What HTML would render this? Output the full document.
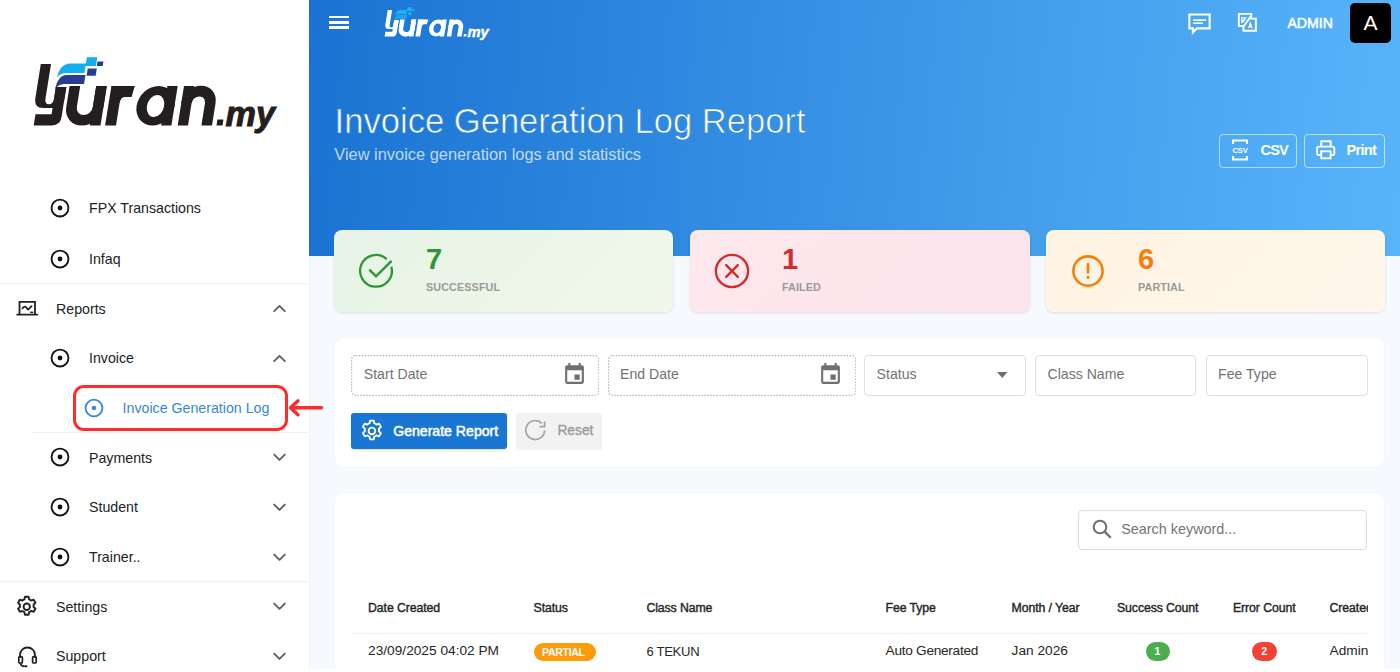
<!DOCTYPE html>
<html>
<head>
<meta charset="utf-8">
<style>
html,body{margin:0;padding:0;}
body{width:1400px;height:672px;overflow:hidden;position:relative;background:#f6faff;font-family:"Liberation Sans",sans-serif;}
.a{position:absolute;}
.t{position:absolute;line-height:1;white-space:nowrap;}
#side{position:absolute;left:0;top:0;width:308.6px;height:672px;background:#fff;box-shadow:1px 0 2px rgba(0,0,0,0.035);z-index:1;}
#hdr{position:absolute;left:308.6px;top:0;width:1091.4px;height:256px;background:linear-gradient(95deg,#1a73d2 0%,#58b4fa 100%);}
.side-t{color:#222;font-size:14.2px;}
.div{position:absolute;height:1px;background:#f0f0f0;}
.card{position:absolute;top:230px;height:82px;border-radius:8px;box-shadow:0 1px 3px rgba(0,0,0,0.12);}
.num{font-size:29px;font-weight:700;}
.lbl{font-size:10.8px;font-weight:700;color:#9a9a9a;}
.fld{position:absolute;top:355px;height:41px;box-sizing:border-box;border-radius:4px;background:#fff;}
.dot{border:1px dotted #b5b5b5;}
.sol{border:1.5px solid #dedede;}
.ph{color:#737373;font-size:14px;}
.th{font-size:11.7px;font-weight:700;color:#2a2a2a;}
.td{font-size:13.5px;color:#2a2a2a;}
</style>
</head>
<body>
<!-- SIDEBAR -->
<div id="side">
<svg class="a" style="left:30px;top:50px" width="250" height="90" viewBox="30 50 250 90">
<style>.lf{fill:#231f20}.lt{stroke:#231f20}.s1{fill:#13aff0}.s2{fill:#2a3b93}</style>
<g transform="matrix(1,0,-0.16,1,20.06,0)">
 <path class="s1" d="M86.4,57.3 L86.4,66 L76,66 L76,72.9 L59,72.9 C54,72.9 51,74.5 49.5,77 C50,69 53,63.6 61,63.6 L76,63.6 L76,57.3 Z"/>
 <path class="s2" d="M77.4,75.1 L59,75.1 C52,75.1 50,81 49.3,89.5 C51,85.5 54,83.9 59,83.9 L77.4,83.9 Z"/>
 <rect class="s2" x="78.7" y="68.6" width="9.05" height="7.15"/>
 <rect class="s2" x="87.3" y="61.4" width="5.9" height="4.6"/>
 <path class="lf" d="M31,64 L41.2,64 L41.2,98.5 Q41.2,104.3 45.5,104.3 Q49.8,104.3 49.8,98.5 L49.8,87 L60.2,87 L60.2,99 Q60.2,108 51,108 L40.5,108 Q31,108 31,98 Z"/>
 <path class="lf" d="M49.8,87 L60.2,87 L60.2,117 Q60.2,125.4 52,125.4 L33.7,125.4 L33.7,114.2 L49.8,114.2 Z"/>
 <path class="lt" fill="none" stroke-width="10.6" d="M68.6,86 L68.6,107 A13.3,13.3 0 0 0 95.2,107 L95.2,86"/>
 <rect class="lf" x="89.9" y="86" width="10.6" height="39.4"/>
 <rect class="lf" x="105.1" y="86" width="10.9" height="39.4"/>
 <path class="lf" d="M105.1,86 L128.5,86 L127,96.9 L120,96.9 Q116,97.5 116,103 Z"/>
 <path class="lf" fill-rule="evenodd" d="M133.45,105.7 A19,19.7 0 1 0 171.45,105.7 A19,19.7 0 1 0 133.45,105.7 Z M143.8,105.95 A8.65,10.95 0 1 0 161.1,105.95 A8.65,10.95 0 1 0 143.8,105.95 Z"/>
 <rect class="lf" x="161.1" y="86" width="10.3" height="39.4"/>
 <rect class="lf" x="177.7" y="86" width="10.3" height="39.4"/>
 <path class="lt" fill="none" stroke-width="10.6" d="M182.85,103 A11.9,11.9 0 0 1 206.7,103 L206.7,125.4"/>
 <rect class="lf" x="216.5" y="119.5" width="6" height="5.9"/>
</g>
<text class="lf" x="225.6" y="125.5" font-family="Liberation Sans" font-weight="700" font-style="italic" font-size="34.2" stroke="#231f20" stroke-width="1">my</text>
</svg>
<svg class="a" style="left:49.1px;top:197.1px" width="22" height="22" viewBox="0 0 22 22"><circle cx="11" cy="11" r="8.45" fill="none" stroke="#151515" stroke-width="1.85"/><circle cx="11" cy="11" r="2.4" fill="#111"/></svg>
<div class="t" style="left:89.0px;top:201.38px;font-size:14.2px;color:#222;">FPX Transactions</div>
<svg class="a" style="left:49.1px;top:247.60000000000002px" width="22" height="22" viewBox="0 0 22 22"><circle cx="11" cy="11" r="8.45" fill="none" stroke="#151515" stroke-width="1.85"/><circle cx="11" cy="11" r="2.4" fill="#111"/></svg>
<div class="t" style="left:89.0px;top:251.88px;font-size:14.2px;color:#222;">Infaq</div>
<!--ICON reports-->
<div class="t" style="left:56.0px;top:301.88px;font-size:14.2px;color:#222;">Reports</div>
<svg class="a" style="left:271.5px;top:304.1px" width="15" height="9" viewBox="0 0 15 9"><path d="M2.2,7.2 L7.5,1.9 L12.8,7.2" fill="none" stroke="#606060" stroke-width="1.9" stroke-linecap="round" stroke-linejoin="round"/></svg>
<svg class="a" style="left:49.1px;top:347.0px" width="22" height="22" viewBox="0 0 22 22"><circle cx="11" cy="11" r="8.45" fill="none" stroke="#151515" stroke-width="1.85"/><circle cx="11" cy="11" r="2.4" fill="#111"/></svg>
<div class="t" style="left:89.0px;top:351.28px;font-size:14.2px;color:#222;">Invoice</div>
<svg class="a" style="left:271.5px;top:353.5px" width="15" height="9" viewBox="0 0 15 9"><path d="M2.2,7.2 L7.5,1.9 L12.8,7.2" fill="none" stroke="#606060" stroke-width="1.9" stroke-linecap="round" stroke-linejoin="round"/></svg>
<svg class="a" style="left:82.6px;top:396.6px" width="22" height="22" viewBox="0 0 22 22"><circle cx="11" cy="11" r="8.4" fill="none" stroke="#3b86d9" stroke-width="1.8"/><circle cx="11" cy="11" r="2.3" fill="#3b86d9"/></svg>
<div class="t" style="left:122.6px;top:400.88px;font-size:14.2px;color:#3b86d9;">Invoice Generation Log</div>
<svg class="a" style="left:49.1px;top:446.4px" width="22" height="22" viewBox="0 0 22 22"><circle cx="11" cy="11" r="8.45" fill="none" stroke="#151515" stroke-width="1.85"/><circle cx="11" cy="11" r="2.4" fill="#111"/></svg>
<div class="t" style="left:89.0px;top:450.68px;font-size:14.2px;color:#222;">Payments</div>
<svg class="a" style="left:271.5px;top:452.9px" width="15" height="9" viewBox="0 0 15 9"><path d="M2.2,1.6 L7.5,6.9 L12.8,1.6" fill="none" stroke="#606060" stroke-width="1.9" stroke-linecap="round" stroke-linejoin="round"/></svg>
<svg class="a" style="left:49.1px;top:496.2px" width="22" height="22" viewBox="0 0 22 22"><circle cx="11" cy="11" r="8.45" fill="none" stroke="#151515" stroke-width="1.85"/><circle cx="11" cy="11" r="2.4" fill="#111"/></svg>
<div class="t" style="left:89.0px;top:500.48px;font-size:14.2px;color:#222;">Student</div>
<svg class="a" style="left:271.5px;top:502.7px" width="15" height="9" viewBox="0 0 15 9"><path d="M2.2,1.6 L7.5,6.9 L12.8,1.6" fill="none" stroke="#606060" stroke-width="1.9" stroke-linecap="round" stroke-linejoin="round"/></svg>
<svg class="a" style="left:49.1px;top:546.2px" width="22" height="22" viewBox="0 0 22 22"><circle cx="11" cy="11" r="8.45" fill="none" stroke="#151515" stroke-width="1.85"/><circle cx="11" cy="11" r="2.4" fill="#111"/></svg>
<div class="t" style="left:89.0px;top:550.48px;font-size:14.2px;color:#222;">Trainer..</div>
<svg class="a" style="left:271.5px;top:552.7px" width="15" height="9" viewBox="0 0 15 9"><path d="M2.2,1.6 L7.5,6.9 L12.8,1.6" fill="none" stroke="#606060" stroke-width="1.9" stroke-linecap="round" stroke-linejoin="round"/></svg>
<!--ICON gear-->
<div class="t" style="left:56.0px;top:599.88px;font-size:14.2px;color:#222;">Settings</div>
<svg class="a" style="left:271.5px;top:602.1px" width="15" height="9" viewBox="0 0 15 9"><path d="M2.2,1.6 L7.5,6.9 L12.8,1.6" fill="none" stroke="#606060" stroke-width="1.9" stroke-linecap="round" stroke-linejoin="round"/></svg>
<!--ICON support-->
<div class="t" style="left:56.0px;top:649.48px;font-size:14.2px;color:#222;">Support</div>
<svg class="a" style="left:271.5px;top:651.7px" width="15" height="9" viewBox="0 0 15 9"><path d="M2.2,1.6 L7.5,6.9 L12.8,1.6" fill="none" stroke="#606060" stroke-width="1.9" stroke-linecap="round" stroke-linejoin="round"/></svg>
<svg class="a" style="left:14px;top:296px" width="26" height="24" viewBox="14 296 26 24"><path d="M19.5,314 V301.9 H35 V314" fill="none" stroke="#222" stroke-width="1.8"/><path d="M17.2,314.6 H37.3" stroke="#222" stroke-width="1.9" stroke-linecap="round"/><path d="M22.4,308.4 Q24.2,306 25.6,306.7 L28.1,309.6 L31.6,306.2" fill="none" stroke="#222" stroke-width="1.7" stroke-linecap="round" stroke-linejoin="round"/><rect x="30.1" y="311.6" width="3.2" height="1.5" fill="#222"/></svg>
<svg class="a" style="left:14.4px;top:593.7px" width="25.5" height="25.5" viewBox="0 0 24 24"><path fill="none" stroke="#222" stroke-width="1.8" stroke-linejoin="round" d="M10.3,2.6 h3.4 l0.5,2.4 a7.4,7.4 0 0 1 2,1.15 l2.3,-0.8 l1.7,2.95 l-1.8,1.6 a7.4,7.4 0 0 1 0,2.3 l1.8,1.6 l-1.7,2.95 l-2.3,-0.8 a7.4,7.4 0 0 1 -2,1.15 l-0.5,2.4 h-3.4 l-0.5,-2.4 a7.4,7.4 0 0 1 -2,-1.15 l-2.3,0.8 l-1.7,-2.95 l1.8,-1.6 a7.4,7.4 0 0 1 0,-2.3 l-1.8,-1.6 l1.7,-2.95 l2.3,0.8 a7.4,7.4 0 0 1 2,-1.15 Z"/><circle cx="12" cy="12" r="3" fill="none" stroke="#222" stroke-width="1.8"/></svg>
<svg class="a" style="left:16px;top:644px" width="23" height="24" viewBox="0 0 23 24"><path d="M4,14 V11 a7.5,7.5 0 0 1 15,0 V14" fill="none" stroke="#222" stroke-width="1.8"/><rect x="2.8" y="12.6" width="3.6" height="6.4" rx="1" fill="none" stroke="#222" stroke-width="1.7"/><rect x="16.6" y="12.6" width="3.6" height="6.4" rx="1" fill="none" stroke="#222" stroke-width="1.7"/><path d="M4.6,19 Q4.6,22 8,22.3" fill="none" stroke="#222" stroke-width="1.7"/><rect x="8" y="21.3" width="3.5" height="2" rx="1" fill="#222"/></svg>
<div class="div" style="left:0;top:282.5px;width:308px"></div>
<div class="div" style="left:31px;top:432px;width:277px"></div>
<div class="div" style="left:0;top:581px;width:308px"></div>
</div>
<div class="a" style="z-index:5;left:72.8px;top:384.6px;width:215.4px;height:46.2px;box-sizing:border-box;border:3.4px solid #ff2b2b;border-radius:11px"></div>
<svg class="a" style="z-index:5;left:286px;top:398px" width="40" height="20" viewBox="286 398 40 20"><path d="M290.5,407.8 H321.5 M298,400.8 L290.5,407.8 L298,414.8" fill="none" stroke="#ff2b2b" stroke-width="3.4" stroke-linecap="round" stroke-linejoin="round"/></svg>

<!-- HEADER -->
<div id="hdr"></div>
<!--HDRCONTENT-->
<div class="a" style="left:329.2px;top:15.6px;width:20px;height:2.6px;background:#fff"></div>
<div class="a" style="left:329.2px;top:21px;width:20px;height:2.6px;background:#fff"></div>
<div class="a" style="left:329.2px;top:26.3px;width:20px;height:2.6px;background:#fff"></div>
<svg class="a" style="left:1184px;top:10px" width="30" height="26" viewBox="1184 10 30 26"><path d="M1189.35,14.55 H1209.65 V28.35 H1196.9 L1192.9,32.4 V28.35 H1189.35 Z" fill="none" stroke="#fff" stroke-width="2.1" stroke-linejoin="miter"/><rect x="1193.1" y="19.3" width="13" height="1.6" fill="#fff"/><rect x="1193.1" y="22.4" width="9.9" height="1.6" fill="#fff"/></svg>
<svg class="a" style="left:1234px;top:10px" width="28" height="26" viewBox="1234 10 28 26"><path d="M1243.5,26.05 H1238.85 V13.85 H1251.25 V17.6" fill="none" stroke="#fff" stroke-width="1.9"/><path d="M1249.3,18.65 H1255.85 V30.75 H1243.45 V26.2" fill="none" stroke="#fff" stroke-width="1.9"/><path d="M1250.6,16.6 L1243.3,26.8" stroke="#fff" stroke-width="1.9"/><path d="M1241,17.2 L1246.8,17.2 L1243.6,22.2 L1241.4,23.3 Z M1242.5,18.6 L1242.5,20.8 L1244.3,18.6 Z" fill="#fff" fill-rule="evenodd"/><path d="M1247.9,28.6 L1250.2,21.2 L1252.9,28.6 L1250.4,27.2 Z" fill="#fff"/></svg>
<div class="t" style="left:1287.4px;top:15.86px;font-size:14.1px;color:#fff;-webkit-text-stroke:0.5px #fff">ADMIN</div>
<div class="a" style="left:1350.3px;top:2.6px;width:41px;height:40.7px;background:#000;border-radius:5px"></div>
<div class="t" style="left:1363.6px;top:11.7px;font-size:21px;color:#fff;">A</div>
<div class="t" style="left:334.6px;top:104.0px;font-size:34.6px;color:#fff;-webkit-text-stroke:0.7px #2985dc;">Invoice Generation Log Report</div>
<div class="t" style="left:334.3px;top:146.12px;font-size:16.4px;color:rgba(255,255,255,0.72);">View invoice generation logs and statistics</div>
<div class="a" style="left:1219.3px;top:133.9px;width:77.4px;height:33.9px;box-sizing:border-box;border:1.4px solid rgba(255,255,255,0.58);border-radius:4px"></div>
<svg class="a" style="left:1231px;top:139px" width="18" height="22" viewBox="0 0 18 22"><path d="M2,5 V1.4 H16 V5 M2,17 V20.6 H16 V17" fill="none" stroke="#fff" stroke-width="2"/><text x="9" y="14.3" text-anchor="middle" font-family="Liberation Sans" font-weight="700" font-size="7.6" fill="#fff" letter-spacing="-0.2">CSV</text></svg>
<div class="t" style="left:1260.6px;top:142.5px;font-size:14.6px;color:#fff;font-weight:700;letter-spacing:-0.95px">CSV</div>
<div class="a" style="left:1304.3px;top:133.9px;width:80.7px;height:33.9px;box-sizing:border-box;border:1.4px solid rgba(255,255,255,0.58);border-radius:4px"></div>
<svg class="a" style="left:1312px;top:136px" width="28" height="28" viewBox="1312 136 28 28"><path d="M1321.2,146.2 V141.2 H1330.6 V146.2" fill="none" stroke="#fff" stroke-width="1.9"/><path d="M1320,155 H1318.3 Q1317.1,155 1317.1,153.8 V148.6 Q1317.1,146.6 1319.1,146.6 H1332.3 Q1334.3,146.6 1334.3,148.6 V153.8 Q1334.3,155 1333.1,155 H1331.5" fill="none" stroke="#fff" stroke-width="1.9"/><rect x="1321.2" y="151.3" width="9.4" height="7" fill="none" stroke="#fff" stroke-width="1.9"/></svg>
<div class="t" style="left:1346.6px;top:142.5px;font-size:14.6px;color:#fff;font-weight:700;letter-spacing:-0.75px">Print</div>
<!--/HDRCONTENT-->
<!--MAIN-->
<div class="card" style="left:334px;width:339px;background:linear-gradient(135deg,#e6f3e6 0%,#f1f8e9 100%)"></div>
<svg class="a" style="left:352px;top:248px" width="48" height="46" viewBox="352 248 48 46"><path d="M391.36,266.68 A15.9,15.9 0 1 1 386.70,259.04" fill="none" stroke="#2e9636" stroke-width="2.3"/><path d="M369.3,269.7 L376,276.4 L391.6,260.8" fill="none" stroke="#2e9636" stroke-width="2.4" stroke-linejoin="miter"/></svg>
<div class="t" style="left:426.0px;top:245.45px;font-size:29px;color:#2e9636;font-weight:700">7</div>
<div class="t" style="left:426.0px;top:281.86px;font-size:10.8px;color:#9a9a9a;font-weight:700;letter-spacing:0.1px">SUCCESSFUL</div>
<div class="card" style="left:690px;width:339.6px;background:linear-gradient(135deg,#fde8ec 0%,#fbe4ec 100%)"></div>
<svg class="a" style="left:712px;top:251px" width="40" height="40" viewBox="0 0 40 40"><circle cx="20" cy="20" r="16.1" fill="none" stroke="#d52b2b" stroke-width="2.4"/><path d="M14.2,14.2 L25.8,25.8 M25.8,14.2 L14.2,25.8" stroke="#d52b2b" stroke-width="2.4" stroke-linecap="round"/></svg>
<div class="t" style="left:782.0px;top:245.45px;font-size:29px;color:#d52b2b;font-weight:700">1</div>
<div class="t" style="left:782.0px;top:281.86px;font-size:10.8px;color:#9a9a9a;font-weight:700;letter-spacing:0.1px">FAILED</div>
<div class="card" style="left:1046px;width:339px;background:linear-gradient(135deg,#fff3e1 0%,#fff6ec 100%)"></div>
<svg class="a" style="left:1068px;top:251px" width="40" height="40" viewBox="0 0 40 40"><circle cx="20" cy="20" r="14.6" fill="none" stroke="#f57f0a" stroke-width="2.6"/><path d="M20,13 V21.6" stroke="#f57f0a" stroke-width="2.6" stroke-linecap="round"/><circle cx="20" cy="26.3" r="1.5" fill="#f57f0a"/></svg>
<div class="t" style="left:1138.0px;top:245.45px;font-size:29px;color:#f57f0a;font-weight:700">6</div>
<div class="t" style="left:1138.0px;top:281.86px;font-size:10.8px;color:#9a9a9a;font-weight:700;letter-spacing:0.1px">PARTIAL</div>
<div class="a" style="left:334.7px;top:337.5px;width:1049.7px;height:129.6px;background:#fff;border-radius:8px;box-shadow:0 0 2px rgba(0,0,0,0.06)"></div>
<svg class="a" style="left:351.2px;top:355px" width="248.3" height="41" viewBox="0 0 248.3 41"><rect x="0.6" y="0.6" width="247.1" height="39.8" rx="4" fill="#fff" stroke="#b8b8b8" stroke-width="1.2" stroke-dasharray="1.5 1.5"/></svg>
<div class="t" style="left:363.8px;top:367.36px;font-size:14.1px;color:#737373;">Start Date</div>
<svg class="a" style="left:562.12px;top:362.3px" width="25" height="25" viewBox="0 0 24 24"><path fill="#6f6f6f" d="M17 12h-5v5h5v-5zM16 1v2H8V1H6v2H5c-1.11 0-1.99.9-1.99 2L3 19c0 1.1.89 2 2 2h14c1.1 0 2-.9 2-2V5c0-1.1-.9-2-2-2h-1V1h-2zm3 18H5V8h14v11z"/></svg>
<svg class="a" style="left:607.5px;top:355px" width="248.3" height="41" viewBox="0 0 248.3 41"><rect x="0.6" y="0.6" width="247.1" height="39.8" rx="4" fill="#fff" stroke="#b8b8b8" stroke-width="1.2" stroke-dasharray="1.5 1.5"/></svg>
<div class="t" style="left:620.1px;top:367.36px;font-size:14.1px;color:#737373;">End Date</div>
<svg class="a" style="left:818.42px;top:362.3px" width="25" height="25" viewBox="0 0 24 24"><path fill="#6f6f6f" d="M17 12h-5v5h5v-5zM16 1v2H8V1H6v2H5c-1.11 0-1.99.9-1.99 2L3 19c0 1.1.89 2 2 2h14c1.1 0 2-.9 2-2V5c0-1.1-.9-2-2-2h-1V1h-2zm3 18H5V8h14v11z"/></svg>
<div class="fld sol" style="left:864px;width:162.3px"></div>
<div class="t" style="left:876.6px;top:367.36px;font-size:14.1px;color:#737373;">Status</div>
<svg class="a" style="left:996.5px;top:372px" width="11" height="6.5" viewBox="0 0 11 6.5"><path d="M0,0 H10.5 L5.25,6 Z" fill="#6f6f6f"/></svg>
<div class="fld sol" style="left:1034.9px;width:161.6px"></div>
<div class="t" style="left:1047.5px;top:367.36px;font-size:14.1px;color:#737373;">Class Name</div>
<div class="fld sol" style="left:1205.5px;width:162.4px"></div>
<div class="t" style="left:1218.1px;top:367.36px;font-size:14.1px;color:#737373;">Fee Type</div>
<div class="a" style="left:351.4px;top:412.8px;width:155.3px;height:36.4px;background:#1a76d3;border-radius:3px;box-shadow:0 1px 2px rgba(0,0,0,0.15)"></div>
<svg class="a" style="left:359.3px;top:417.5px" width="25.8" height="25.8" viewBox="0 0 24 24"><path fill="none" stroke="#fff" stroke-width="1.7" stroke-linejoin="round" d="M10.3,2.4 h3.4 l0.5,2.5 a7.6,7.6 0 0 1 2.1,1.2 l2.4,-0.8 l1.7,2.95 l-1.9,1.7 a7.6,7.6 0 0 1 0,2.4 l1.9,1.7 l-1.7,2.95 l-2.4,-0.8 a7.6,7.6 0 0 1 -2.1,1.2 l-0.5,2.5 h-3.4 l-0.5,-2.5 a7.6,7.6 0 0 1 -2.1,-1.2 l-2.4,0.8 l-1.7,-2.95 l1.9,-1.7 a7.6,7.6 0 0 1 0,-2.4 l-1.9,-1.7 l1.7,-2.95 l2.4,0.8 a7.6,7.6 0 0 1 2.1,-1.2 Z"/><circle cx="12" cy="12" r="3.1" fill="none" stroke="#fff" stroke-width="1.7"/></svg>
<div class="t" style="left:393.2px;top:423.66px;font-size:14.1px;color:#fff;-webkit-text-stroke:0.5px #fff">Generate Report</div>
<div class="a" style="left:516px;top:412.7px;width:86.1px;height:36.9px;background:#f2f2f2;border-radius:3px"></div>
<svg class="a" style="left:524px;top:418px" width="24" height="24" viewBox="0 0 24 24"><path d="M20.6,12.2 A9.4,9.4 0 1 1 17.8,5.4" fill="none" stroke="#a3a3a3" stroke-width="1.7"/><path d="M20.6,3.4 V8.6 H15.4" fill="none" stroke="#a3a3a3" stroke-width="1.7"/></svg>
<div class="t" style="left:557.4px;top:423.92px;font-size:13.8px;color:#9b9b9b;-webkit-text-stroke:0.35px #9b9b9b;">Reset</div>
<div class="a" style="left:334.7px;top:492.5px;width:1049.3px;height:200px;background:#fff;border-radius:8px;box-shadow:0 0 2px rgba(0,0,0,0.06)"></div>
<div class="a" style="left:1078.2px;top:509.6px;width:289.2px;height:40.6px;box-sizing:border-box;border:1.5px solid #dcdcdc;border-radius:4px"></div>
<svg class="a" style="left:1090px;top:517px" width="24" height="24" viewBox="0 0 24 24"><circle cx="10" cy="10" r="6.3" fill="none" stroke="#6f6f6f" stroke-width="2"/><path d="M14.6,14.6 L20.8,20.8" stroke="#6f6f6f" stroke-width="2.2"/></svg>
<div class="t" style="left:1121.2px;top:522.21px;font-size:14.4px;color:#757575;">Search keyword...</div>
<div class="a" style="left:351px;top:633px;width:1017px;height:1px;background:#f0f1f3"></div>
<div class="t" style="left:368.1px;top:602.49px;font-size:12.3px;color:#262626;-webkit-text-stroke:0.4px #262626;letter-spacing:-0.1px">Date Created</div>
<div class="t" style="left:533.6px;top:602.49px;font-size:12.3px;color:#262626;-webkit-text-stroke:0.4px #262626;letter-spacing:-0.1px">Status</div>
<div class="t" style="left:646.4px;top:602.49px;font-size:12.3px;color:#262626;-webkit-text-stroke:0.4px #262626;letter-spacing:-0.1px">Class Name</div>
<div class="t" style="left:885.6px;top:602.49px;font-size:12.3px;color:#262626;-webkit-text-stroke:0.4px #262626;letter-spacing:-0.1px">Fee Type</div>
<div class="t" style="left:1011.6px;top:602.49px;font-size:12.3px;color:#262626;-webkit-text-stroke:0.4px #262626;letter-spacing:-0.1px">Month / Year</div>
<div class="t" style="left:1117.0px;top:602.49px;font-size:12.3px;color:#262626;-webkit-text-stroke:0.4px #262626;letter-spacing:-0.1px">Success Count</div>
<div class="t" style="left:1233.0px;top:602.49px;font-size:12.3px;color:#262626;-webkit-text-stroke:0.4px #262626;letter-spacing:-0.1px">Error Count</div>
<div class="a" style="left:1329.6px;top:590px;width:38.4px;height:40px;overflow:hidden"><div class="t" style="left:0.0px;top:12.49px;font-size:12.3px;color:#262626;-webkit-text-stroke:0.4px #262626;letter-spacing:-0.1px">Created By</div></div>
<div class="t" style="left:368.1px;top:644.10px;font-size:13.7px;color:#262626;">23/09/2025 04:02 PM</div>
<div class="t" style="left:646.4px;top:644.6px;font-size:13.1px;color:#262626;letter-spacing:-0.3px;">6 TEKUN</div>
<div class="t" style="left:885.6px;top:644.10px;font-size:13.7px;color:#262626;letter-spacing:-0.3px;">Auto Generated</div>
<div class="t" style="left:1011.6px;top:644.10px;font-size:13.7px;color:#262626;">Jan 2026</div>
<div class="a" style="left:1329.6px;top:636px;width:38.4px;height:36px;overflow:hidden"><div class="t" style="left:0.0px;top:8.10px;font-size:13.7px;color:#262626;">Admin</div></div>
<div class="a" style="left:533.6px;top:642.9px;width:62.1px;height:18.5px;background:#ff9b0a;border-radius:10px"></div>
<div class="t" style="left:542.0px;top:646.63px;font-size:10.6px;color:#fff;font-weight:700;letter-spacing:-0.35px">PARTIAL</div>
<div class="a" style="left:1146px;top:641.6px;width:24.4px;height:19.4px;background:#4cae50;border-radius:10px"></div>
<div class="t" style="left:1154.5px;top:646.31px;font-size:10.5px;color:#fff;font-weight:700">1</div>
<div class="a" style="left:1251.6px;top:641.6px;width:25.4px;height:19.4px;background:#f24236;border-radius:10px"></div>
<div class="t" style="left:1261.3px;top:646.31px;font-size:10.5px;color:#fff;font-weight:700">2</div>
<!--/MAIN-->
<svg class="a" style="left:382.7px;top:4.15px" width="108" height="38.9" viewBox="30 50 250 90">
<style>.wf{fill:#fff}.wt{stroke:#fff}.c1{fill:#20b0f0}.c2{fill:#1ea6ee}</style>
<g transform="matrix(1,0,-0.16,1,20.06,0)">
 <path class="c1" d="M86.4,57.3 L86.4,66 L76,66 L76,72.9 L59,72.9 C54,72.9 51,74.5 49.5,77 C50,69 53,63.6 61,63.6 L76,63.6 L76,57.3 Z"/>
 <path class="c2" d="M77.4,75.1 L59,75.1 C52,75.1 50,81 49.3,89.5 C51,85.5 54,83.9 59,83.9 L77.4,83.9 Z"/>
 <rect class="c2" x="78.7" y="68.6" width="9.05" height="7.15"/>
 <rect class="c2" x="87.3" y="61.4" width="5.9" height="4.6"/>
 <path class="wf" d="M31,64 L41.2,64 L41.2,98.5 Q41.2,104.3 45.5,104.3 Q49.8,104.3 49.8,98.5 L49.8,87 L60.2,87 L60.2,99 Q60.2,108 51,108 L40.5,108 Q31,108 31,98 Z"/>
 <path class="wf" d="M49.8,87 L60.2,87 L60.2,117 Q60.2,125.4 52,125.4 L33.7,125.4 L33.7,114.2 L49.8,114.2 Z"/>
 <path class="wt" fill="none" stroke-width="10.6" d="M68.6,86 L68.6,107 A13.3,13.3 0 0 0 95.2,107 L95.2,86"/>
 <rect class="wf" x="89.9" y="86" width="10.6" height="39.4"/>
 <rect class="wf" x="105.1" y="86" width="10.9" height="39.4"/>
 <path class="wf" d="M105.1,86 L128.5,86 L127,96.9 L120,96.9 Q116,97.5 116,103 Z"/>
 <path class="wf" fill-rule="evenodd" d="M133.45,105.7 A19,19.7 0 1 0 171.45,105.7 A19,19.7 0 1 0 133.45,105.7 Z M143.8,105.95 A8.65,10.95 0 1 0 161.1,105.95 A8.65,10.95 0 1 0 143.8,105.95 Z"/>
 <rect class="wf" x="161.1" y="86" width="10.3" height="39.4"/>
 <rect class="wf" x="177.7" y="86" width="10.3" height="39.4"/>
 <path class="wt" fill="none" stroke-width="10.6" d="M182.85,103 A11.9,11.9 0 0 1 206.7,103 L206.7,125.4"/>
 <rect class="wf" x="216.5" y="119.5" width="6" height="5.9"/>
</g>
<text class="wf" x="225.6" y="125.5" font-family="Liberation Sans" font-weight="700" font-style="italic" font-size="34.2" stroke="#fff" stroke-width="1">my</text>
</svg>

<div class="a" style="z-index:10;left:0;top:668.6px;width:1400px;height:4px;background:#fff"></div>
</body>
</html>
